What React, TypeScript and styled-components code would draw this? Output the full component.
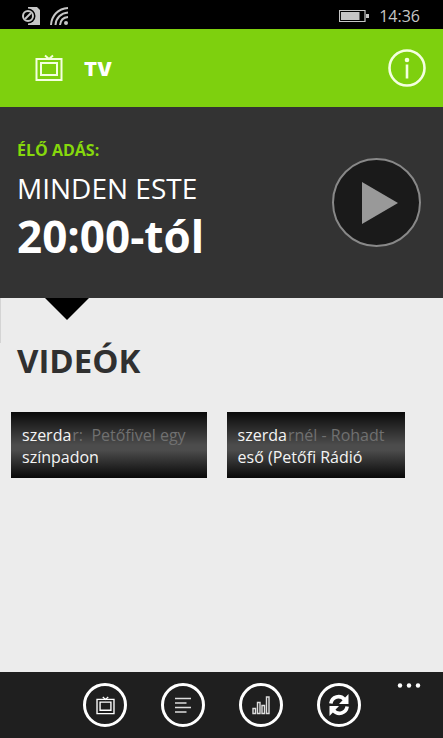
import React from "react";
import styled, { createGlobalStyle } from "styled-components";

const GlobalStyle = createGlobalStyle`
  * { box-sizing: border-box; }
  body { margin: 0; background: #ececec; font-family: "Open Sans", "Noto Sans", sans-serif; }
  button { font: inherit; color: inherit; background: none; border: 0; padding: 0; cursor: pointer; }
  h1, h2, p { margin: 0; }
  svg { display: block; }
`;

const Page = styled.div`
  min-height: 100vh;
  display: flex;
  flex-direction: column;
`;

const StatusBar = styled.div`
  height: 29px;
  padding: 2px 23px 0 22px;
  display: flex;
  align-items: center;
  gap: 10px;
  background: #000;
  color: #c6c6c6;
  font-size: 16px;
  line-height: 24px;
`;

const Spacer = styled.div`
  flex: 1;
`;

const Header = styled.header`
  height: 78px;
  padding: 0 17px 0 35px;
  display: flex;
  align-items: center;
  background: #7ed00e;
  color: #f4ffe0;
`;

const HeaderTitle = styled.h1`
  flex: 1;
  margin-left: 21px;
  padding-top: 4px;
  font: 900 19px/24px Inter, sans-serif;
  color: #fff;
`;

const Live = styled.section`
  min-height: 191px;
  padding: 0 22px 0 17px;
  display: flex;
  align-items: center;
  justify-content: space-between;
  background: #333;
  color: #fff;
`;

const LiveText = styled.div`
  padding-bottom: 4px;
`;

const LiveLabel = styled.p`
  font-size: 16px;
  line-height: 24px;
  font-weight: 700;
  color: #86d80c;
`;

const LiveWhen = styled.p`
  margin-top: 6px;
  font-size: 28px;
  line-height: 40px;
`;

const LiveTime = styled.p`
  font-size: 44px;
  line-height: 56px;
  font-weight: 700;
`;

const PlayButton = styled.button`
  width: 89px;
  height: 89px;
  display: grid;
  place-items: center;
  border: 2px solid #888;
  border-radius: 50%;
  background: #1a1a1a;
`;

const Content = styled.main`
  flex: 1;
  background: #ececec;
`;

const PointerRow = styled.div`
  height: 45px;
  padding-left: 44px;
  border-left: 1px solid #d4d4d4;
`;

const Pointer = styled.div`
  width: 44px;
  height: 22px;
  background: #000;
  clip-path: polygon(0 0, 100% 0, 50% 100%);
`;

const SectionTitle = styled.h2`
  padding: 0 17px;
  font-size: 33px;
  line-height: 36px;
  font-weight: 700;
  color: #303030;
`;

const VideoList = styled.div`
  display: flex;
  align-items: flex-start;
  gap: 20px;
  padding: 33px 11px;
`;

const VideoTile = styled.button`
  height: 66px;
  padding: 12px 21px 0 11px;
  display: flex;
  flex-direction: column;
  align-items: flex-start;
  justify-content: flex-start;
  font-size: 16px;
  line-height: 22px;
  white-space: pre;
  color: #f4f4f4;
  background: linear-gradient(#0a0a0a, #4c4c4c 50%, #4c4c4c 58%, #080808);
`;

const TileLine = styled.span`
  display: flex;
  gap: 1px;
`;

const FadedText = styled.span`
  color: #707070;
`;

const AppBar = styled.nav`
  height: 66px;
  padding: 0 22px 0 83px;
  display: flex;
  align-items: center;
  gap: 34px;
  background: #1f1f1f;
  color: #fff;
`;

const RoundButton = styled.button`
  width: 44px;
  height: 44px;
  flex: none;
  display: grid;
  place-items: center;
  border: 3px solid #fff;
  border-radius: 50%;
`;

const MoreButton = styled.button`
  align-self: flex-start;
  padding: 11px 0;
  margin-left: auto;
`;

const TvIcon = ({ size }: { size: number }) => (
  <svg width={size} height={size} viewBox="0 0 28 28" fill="none" stroke="currentColor" strokeWidth="2">
    <path d="M1.500 5h25v21h-25z" />
    <path d="M6 9h16v12H6z" />
    <path d="M10 1.500l4 3.500 4-3.500" />
  </svg>
);

const SimIcon = () => (
  <svg width="18" height="18" viewBox="0 0 18 18" fill="none">
    <path d="M6 0h9l3 3v15H6z" fill="#c6c6c6" />
    <circle cx="6" cy="9" r="7.500" fill="#000" />
    <circle cx="6" cy="9" r="5" stroke="#c6c6c6" strokeWidth="2" />
    <path d="M3 12l6-6" stroke="#c6c6c6" strokeWidth="2" />
  </svg>
);

const WifiIcon = () => (
  <svg width="19" height="18" viewBox="0 0 19 18" fill="none" stroke="currentColor" strokeWidth="2">
    <path d="M1 18C1.500 9 8 1.500 18 1" />
    <path d="M5.500 18C6 11 11 6 18 5.500" />
    <path d="M10 18C10.500 13.500 13 10.500 18 10" />
    <circle cx="16" cy="16" r="2" fill="currentColor" stroke="none" />
  </svg>
);

const BatteryIcon = () => (
  <svg width="30" height="12" viewBox="0 0 30 12">
    <path d="M.5.5h25.500v11H.5z" fill="none" stroke="currentColor" strokeWidth="1.200" />
    <path d="M2 2h18.500v8H2zM27 4h3v4h-3z" fill="currentColor" />
  </svg>
);

const InfoIcon = () => (
  <svg width="38" height="38" viewBox="0 0 38 38" fill="none" stroke="currentColor">
    <circle cx="19" cy="19" r="17.500" strokeWidth="2.600" />
    <path d="M19 15.500v14" strokeWidth="2.600" />
    <circle cx="19" cy="11" r="2.300" fill="currentColor" stroke="none" />
  </svg>
);

const PlayIcon = () => (
  <svg width="44" height="44" viewBox="0 0 44 44">
    <path d="M7 1l36 21L7 43z" fill="#999" />
  </svg>
);

const LinesIcon = () => (
  <svg width="18" height="18" viewBox="0 0 18 18" stroke="#ddd" strokeWidth="1.300">
    <path d="M1 2.500h16M1 7h11.500M1 11.500h16M1 16h11.500" />
  </svg>
);

const ChartIcon = () => (
  <svg width="18" height="20" viewBox="0 0 18 20" fill="none" stroke="#ddd">
    <path d="M1 13.500h2.500v5H1zM5.500 7.500H8v11H5.500zM10 10.500h2.500v8H10zM14.500 2H17v16.500h-2.500z" strokeWidth="1.400" />
  </svg>
);

const RefreshIcon = () => (
  <svg width="22" height="24" viewBox="0 0 22 24" fill="none" stroke="#fff" strokeWidth="3.600">
    <path d="M2.800 10.500C4 3.500 12 1.500 16.500 6.500" />
    <path d="M20.500 1v10h-9.500z" fill="#fff" stroke="none" />
    <path d="M19.200 13.500C18 20.500 10 22.500 5.500 17.500" />
    <path d="M1.500 23V13H11z" fill="#fff" stroke="none" />
  </svg>
);

const DotsIcon = () => (
  <svg width="24" height="5" viewBox="0 0 24 5" fill="#fff">
    <circle cx="3" cy="2.500" r="2.200" />
    <circle cx="12" cy="2.500" r="2.200" />
    <circle cx="21" cy="2.500" r="2.200" />
  </svg>
);

const videos = [
  { day: "szerda", faded: "r:  Petőfivel egy", title: "színpadon" },
  { day: "szerda", faded: "rnél - Rohadt", title: "eső (Petőfi Rádió" },
];

export default function App() {
  return (
    <Page>
      <GlobalStyle />
      <StatusBar>
        <SimIcon />
        <WifiIcon />
        <Spacer />
        <BatteryIcon />
        <time>14:36</time>
      </StatusBar>
      <Header>
        <TvIcon size={28} />
        <HeaderTitle>TV</HeaderTitle>
        <button aria-label="Információ"><InfoIcon /></button>
      </Header>
      <Live>
        <LiveText>
          <LiveLabel>ÉLŐ ADÁS:</LiveLabel>
          <LiveWhen>MINDEN ESTE</LiveWhen>
          <LiveTime>20:00-tól</LiveTime>
        </LiveText>
        <PlayButton aria-label="Lejátszás"><PlayIcon /></PlayButton>
      </Live>
      <Content>
        <PointerRow><Pointer /></PointerRow>
        <SectionTitle>VIDEÓK</SectionTitle>
        <VideoList>
          {videos.map((video) => (
            <VideoTile key={video.title}>
              <TileLine>
                <span>{video.day}</span>
                <FadedText>{video.faded}</FadedText>
              </TileLine>
              <span>{video.title}</span>
            </VideoTile>
          ))}
        </VideoList>
      </Content>
      <AppBar>
        <RoundButton aria-label="TV"><TvIcon size={19} /></RoundButton>
        <RoundButton aria-label="Hírek"><LinesIcon /></RoundButton>
        <RoundButton aria-label="Toplista"><ChartIcon /></RoundButton>
        <RoundButton aria-label="Frissítés"><RefreshIcon /></RoundButton>
        <MoreButton aria-label="Több"><DotsIcon /></MoreButton>
      </AppBar>
    </Page>
  );
}
